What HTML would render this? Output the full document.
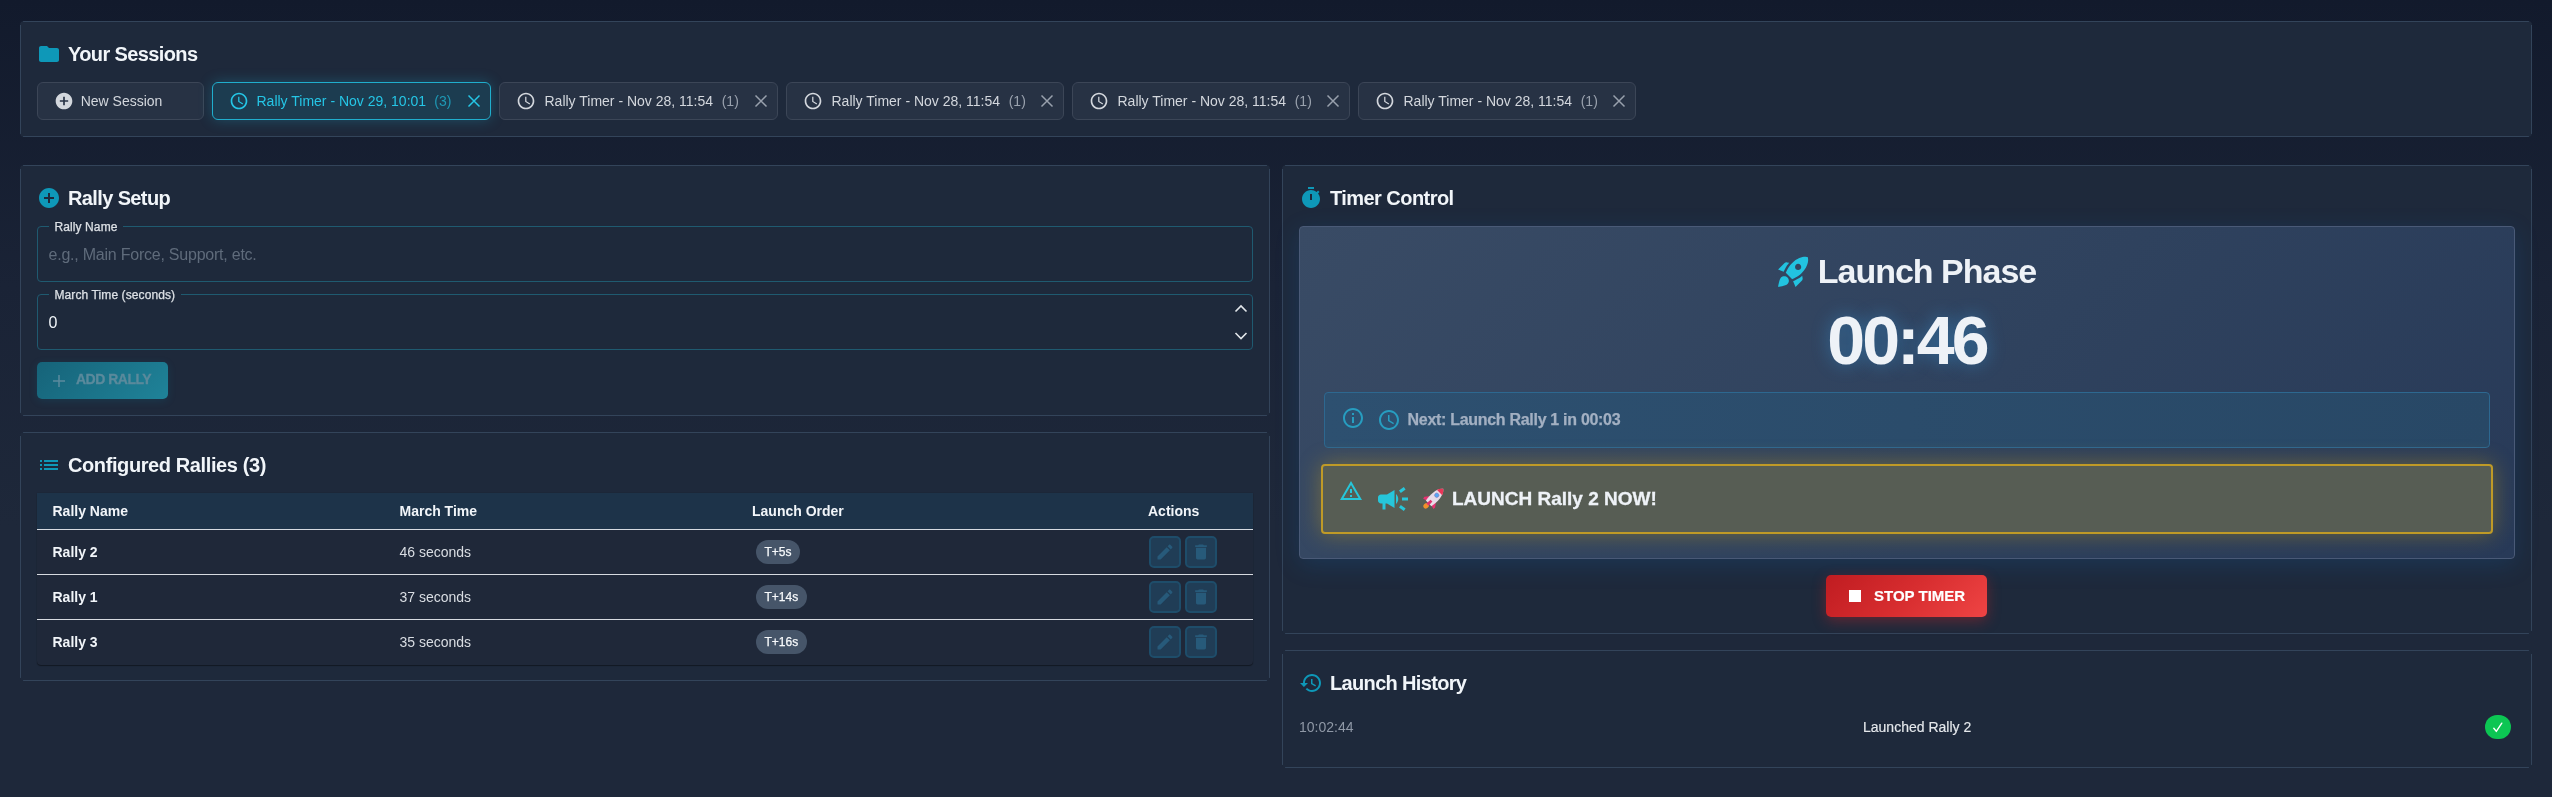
<!DOCTYPE html>
<html><head><meta charset="utf-8">
<style>
*{box-sizing:border-box;margin:0;padding:0}
html,body{width:2552px;height:797px;overflow:hidden}
body>*{will-change:transform}
body{font-family:"Liberation Sans",sans-serif;background:linear-gradient(180deg,#121a2c 0%,#1a2336 36%,#1e283a 66%,#1e283a 100%);color:#f1f5f9;position:relative}
.card{position:absolute;border-radius:4px;background:linear-gradient(#33445a,#33445a) center top/calc(100% - 6px) 1px no-repeat,linear-gradient(#33445a,#33445a) center bottom/calc(100% - 6px) 1px no-repeat,linear-gradient(#33445a,#33445a) left center/1px calc(100% - 7px) no-repeat,linear-gradient(#33445a,#33445a) right center/1px calc(100% - 7px) no-repeat,#1e293b}
.ttl{position:absolute;left:48px;top:17px;height:32px;line-height:32px;font-size:20px;font-weight:bold;color:#f1f5f9;letter-spacing:-0.62px;white-space:nowrap}
.ico{position:absolute;left:17px;top:21px;width:24px;height:24px;fill:#0e98b8}
.chip{position:absolute;top:82px;height:38px;border:1px solid #3c4657;background:#273244;border-radius:6px;display:flex;align-items:center;font-size:14px;color:#d3d7dd;white-space:nowrap}
.chip svg{width:20px;height:20px;fill:#d3d7dd;flex:none}
.chip .cl{margin-left:16px}
.chip .tx{margin-left:8.5px}
.chip .ct{margin-left:8.6px;color:#99a1ad}
.chip .x{position:absolute;right:6px;top:8px;fill:none;stroke:#99a1ad}
.chip.act{border-color:#20aecd;background:#1c3c50;color:#25c6e6;box-shadow:0 0 14px rgba(34,182,214,0.28)}
.chip.act svg{fill:#25c6e6}
.chip.act .ct{color:#1e98b5}
.chip.act .x{stroke:#25c6e6}

.fld{position:absolute;left:37px;width:1216px;height:56px}
.fld fieldset{position:absolute;inset:0;border:1px solid #1f5a70;border-radius:4px;padding:0 8px;pointer-events:none}
.fld legend{font-size:12px;height:0;padding:0 4.5px;visibility:visible;line-height:0;color:transparent;white-space:nowrap;letter-spacing:0.1px}
.fld .lbl{position:absolute;left:12px;top:-6px;padding:0 5.5px;background:#1e293b;font-size:12px;line-height:14px;color:#dde1e6;white-space:nowrap;-webkit-text-stroke:0.25px #dde1e6;letter-spacing:0.1px}
.fld .val{position:absolute;left:11.5px;top:1px;height:56px;line-height:56px;font-size:16px;white-space:nowrap}
.btn-add{position:absolute;left:37px;top:362px;width:131px;height:37px;border-radius:5px;background:linear-gradient(135deg,#166379 0%,#1f8399 100%);box-shadow:0 2px 8px rgba(8,145,178,0.15)}
table.rt{border-collapse:collapse;width:1216px}
.tbl{position:absolute;left:37px;top:493px;width:1216px;border-radius:0 0 4px 4px;overflow:hidden;background:#1f2839;box-shadow:0 1px 1px rgba(0,0,0,0.4),0 0 1px rgba(0,0,0,0.35)}
.tbl .th{height:37px;background:#1d3349;border-bottom:1px solid #d6dae0;position:relative}
.tbl .tr{height:45px;position:relative;border-bottom:1px solid #d6dae0}
.tbl .tr:last-child{border-bottom:none}
.tbl .c{position:absolute;white-space:nowrap;font-size:14px}
.tbl .th .c{font-weight:bold;color:#f1f5f9;top:10px;line-height:16px}
.tbl .tr .c{top:14px;line-height:16px;color:#d9dde3}
.tbl .tr .c.b{font-weight:bold;color:#f1f5f9}
.pill{position:absolute;left:719px;top:10px;height:24px;border-radius:12px;background:#465569;color:#f8fafc;font-size:12px;line-height:24px;padding:0 8.5px;-webkit-text-stroke:0.25px #f8fafc;white-space:nowrap}
.ab{position:absolute;top:6px;width:32px;height:32px;border:2px solid #1e4d6a;background:#203d56;border-radius:5px}
.ab svg{position:absolute;left:3.6px;top:3.7px;width:20px;height:20px;fill:#275a7a}

.tbox{position:absolute;left:1299px;top:226px;width:1216px;height:333px;border:1px solid #4a5a77;border-radius:4px;background:linear-gradient(135deg,#394b65 0%,#2f425e 55%,#283a58 100%);box-shadow:0 6px 24px rgba(20,110,190,0.2)}
.ph{position:absolute;left:0;right:0;top:24px;height:40px;display:flex;justify-content:center;align-items:center}
.ph span{font-size:34px;font-weight:bold;color:#eef2f7;letter-spacing:-1.0px;line-height:40px;white-space:nowrap}
.big{position:absolute;left:0;right:0;top:73px;height:80px;text-align:center;font-size:68px;font-weight:bold;color:#eef2f7;line-height:80px;letter-spacing:-2.9px;text-shadow:0 0 18px rgba(56,160,230,0.45)}
.info{position:absolute;left:1324px;top:392px;width:1166px;height:56px;border:1px solid #2d6890;border-radius:4px;background:linear-gradient(90deg,#2d5070 0%,#2b4c6b 50%,#284866 100%)}
.alert{position:absolute;left:1321px;top:464px;width:1172px;height:70px;border:2px solid #bf9a27;border-radius:4px;background:#575d54;box-shadow:0 0 22px rgba(234,179,8,0.35)}
.stop{position:absolute;left:1826px;top:575px;width:161px;height:42px;border-radius:5px;background:linear-gradient(135deg,#c01c21 0%,#d72d2f 50%,#ef4444 100%);box-shadow:0 4px 14px rgba(220,38,38,0.35)}
.hist{position:absolute;font-size:14px;white-space:nowrap;line-height:16px}
</style></head>
<body>

<!-- Sessions card -->
<div class="card" style="left:20px;top:21px;width:2512px;height:116px">
  <svg class="ico" viewBox="0 0 24 24"><path d="M10 4H4c-1.1 0-1.99.9-1.99 2L2 18c0 1.1.9 2 2 2h16c1.1 0 2-.9 2-2V8c0-1.1-.9-2-2-2h-8l-2-2z"/></svg>
  <div class="ttl">Your Sessions</div>
</div>
<div class="chip" style="left:37px;width:167px">
  <svg class="cl" viewBox="0 0 24 24"><path d="M12 2C6.48 2 2 6.48 2 12s4.48 10 10 10 10-4.48 10-10S17.52 2 12 2zm5 11h-4v4h-2v-4H7v-2h4V7h2v4h4v2z"/></svg>
  <span class="tx" style="margin-left:6.7px">New Session</span>
</div>
<div class="chip act" style="left:212px;width:279px">
  <svg class="cl" viewBox="0 0 24 24"><path d="M11.99 2C6.47 2 2 6.48 2 12s4.47 10 9.99 10C17.52 22 22 17.52 22 12S17.52 2 11.99 2zM12 20c-4.42 0-8-3.58-8-8s3.58-8 8-8 8 3.58 8 8-3.58 8-8 8zm.5-13H11v6l5.25 3.15.75-1.23-4.5-2.67z"/></svg>
  <span class="tx" style="margin-left:7.5px">Rally Timer - Nov 29, 10:01</span><span class="ct" style="margin-left:8.2px">(3)</span>
  <svg class="x" viewBox="0 0 24 24"><path d="M5.4 5.4L18.6 18.6M18.6 5.4L5.4 18.6" stroke-width="1.75"/></svg>
</div>
<div class="chip" style="left:499px;width:279px">
  <svg class="cl" viewBox="0 0 24 24"><path d="M11.99 2C6.47 2 2 6.48 2 12s4.47 10 9.99 10C17.52 22 22 17.52 22 12S17.52 2 11.99 2zM12 20c-4.42 0-8-3.58-8-8s3.58-8 8-8 8 3.58 8 8-3.58 8-8 8zm.5-13H11v6l5.25 3.15.75-1.23-4.5-2.67z"/></svg>
  <span class="tx">Rally Timer - Nov 28, 11:54</span><span class="ct">(1)</span>
  <svg class="x" viewBox="0 0 24 24"><path d="M5.4 5.4L18.6 18.6M18.6 5.4L5.4 18.6" stroke-width="1.75"/></svg>
</div>
<div class="chip" style="left:786px;width:278px">
  <svg class="cl" viewBox="0 0 24 24"><path d="M11.99 2C6.47 2 2 6.48 2 12s4.47 10 9.99 10C17.52 22 22 17.52 22 12S17.52 2 11.99 2zM12 20c-4.42 0-8-3.58-8-8s3.58-8 8-8 8 3.58 8 8-3.58 8-8 8zm.5-13H11v6l5.25 3.15.75-1.23-4.5-2.67z"/></svg>
  <span class="tx">Rally Timer - Nov 28, 11:54</span><span class="ct">(1)</span>
  <svg class="x" viewBox="0 0 24 24"><path d="M5.4 5.4L18.6 18.6M18.6 5.4L5.4 18.6" stroke-width="1.75"/></svg>
</div>
<div class="chip" style="left:1072px;width:278px">
  <svg class="cl" viewBox="0 0 24 24"><path d="M11.99 2C6.47 2 2 6.48 2 12s4.47 10 9.99 10C17.52 22 22 17.52 22 12S17.52 2 11.99 2zM12 20c-4.42 0-8-3.58-8-8s3.58-8 8-8 8 3.58 8 8-3.58 8-8 8zm.5-13H11v6l5.25 3.15.75-1.23-4.5-2.67z"/></svg>
  <span class="tx">Rally Timer - Nov 28, 11:54</span><span class="ct">(1)</span>
  <svg class="x" viewBox="0 0 24 24"><path d="M5.4 5.4L18.6 18.6M18.6 5.4L5.4 18.6" stroke-width="1.75"/></svg>
</div>
<div class="chip" style="left:1358px;width:278px">
  <svg class="cl" viewBox="0 0 24 24"><path d="M11.99 2C6.47 2 2 6.48 2 12s4.47 10 9.99 10C17.52 22 22 17.52 22 12S17.52 2 11.99 2zM12 20c-4.42 0-8-3.58-8-8s3.58-8 8-8 8 3.58 8 8-3.58 8-8 8zm.5-13H11v6l5.25 3.15.75-1.23-4.5-2.67z"/></svg>
  <span class="tx">Rally Timer - Nov 28, 11:54</span><span class="ct">(1)</span>
  <svg class="x" viewBox="0 0 24 24"><path d="M5.4 5.4L18.6 18.6M18.6 5.4L5.4 18.6" stroke-width="1.75"/></svg>
</div>


<!-- Rally Setup card -->
<div class="card" style="left:20px;top:165px;width:1250px;height:251px">
  <svg class="ico" viewBox="0 0 24 24"><path d="M12 2C6.48 2 2 6.48 2 12s4.48 10 10 10 10-4.48 10-10S17.52 2 12 2zm5 11h-4v4h-2v-4H7v-2h4V7h2v4h4v2z"/></svg>
  <div class="ttl">Rally Setup</div>
</div>
<div class="fld" style="top:226px">
  <fieldset></fieldset>
  <div class="lbl">Rally Name</div>
  <div class="val" style="color:#5f6b7b;letter-spacing:-0.23px">e.g., Main Force, Support, etc.</div>
</div>
<div class="fld" style="top:294px">
  <fieldset></fieldset>
  <div class="lbl">March Time (seconds)</div>
  <div class="val" style="color:#f1f5f9">0</div>
  <svg style="position:absolute;left:1197px;top:9px;width:14px;height:38px" viewBox="0 0 14 38"><path d="M1.5 8.5 L7 3 L12.5 8.5 M1.5 30 L7 35.5 L12.5 30" stroke="#e2e6ea" stroke-width="1.6" fill="none"/></svg>
</div>
<div class="btn-add">
  <svg style="position:absolute;left:14px;top:11px;width:16px;height:16px" viewBox="0 0 16 16"><path d="M8 2v12M2 8h12" stroke="#5b8b9d" stroke-width="1.5" fill="none"/></svg>
  <div style="position:absolute;left:39px;top:-1px;height:37px;line-height:37px;font-size:14px;font-weight:bold;color:#5b8a9c;letter-spacing:-0.5px;-webkit-text-stroke:0.3px #5b8a9c">ADD RALLY</div>
</div>

<!-- Configured Rallies card -->
<div class="card" style="left:20px;top:432px;width:1250px;height:249px">
  <svg class="ico" viewBox="0 0 24 24"><path d="M3 13h2v-2H3v2zm0 4h2v-2H3v2zm0-8h2V7H3v2zm4 4h14v-2H7v2zm0 4h14v-2H7v2zM7 7v2h14V7H7z"/></svg>
  <div class="ttl" style="letter-spacing:-0.4px">Configured Rallies (3)</div>
</div>
<div class="tbl">
  <div class="th">
    <div class="c" style="left:15.5px">Rally Name</div>
    <div class="c" style="left:362.5px">March Time</div>
    <div class="c" style="left:715px">Launch Order</div>
    <div class="c" style="left:1111px">Actions</div>
  </div>
  
  <div class="tr">
    <div class="c b" style="left:15.5px">Rally 2</div>
    <div class="c" style="left:362.5px">46 seconds</div>
    <div class="pill">T+5s</div>
    <div class="ab" style="left:1112px"><svg viewBox="0 0 24 24"><path d="M3 17.25V21h3.75L17.81 9.94l-3.75-3.75L3 17.25zM20.71 7.04c.39-.39.39-1.02 0-1.41l-2.34-2.34c-.39-.39-1.02-.39-1.41 0l-1.83 1.83 3.75 3.75 1.83-1.83z"/></svg></div>
    <div class="ab" style="left:1148px"><svg viewBox="0 0 24 24"><path d="M6 19c0 1.1.9 2 2 2h8c1.1 0 2-.9 2-2V7H6v12zM19 4h-3.5l-1-1h-5l-1 1H5v2h14V4z"/></svg></div>
  </div>
  <div class="tr">
    <div class="c b" style="left:15.5px">Rally 1</div>
    <div class="c" style="left:362.5px">37 seconds</div>
    <div class="pill">T+14s</div>
    <div class="ab" style="left:1112px"><svg viewBox="0 0 24 24"><path d="M3 17.25V21h3.75L17.81 9.94l-3.75-3.75L3 17.25zM20.71 7.04c.39-.39.39-1.02 0-1.41l-2.34-2.34c-.39-.39-1.02-.39-1.41 0l-1.83 1.83 3.75 3.75 1.83-1.83z"/></svg></div>
    <div class="ab" style="left:1148px"><svg viewBox="0 0 24 24"><path d="M6 19c0 1.1.9 2 2 2h8c1.1 0 2-.9 2-2V7H6v12zM19 4h-3.5l-1-1h-5l-1 1H5v2h14V4z"/></svg></div>
  </div>
  <div class="tr">
    <div class="c b" style="left:15.5px">Rally 3</div>
    <div class="c" style="left:362.5px">35 seconds</div>
    <div class="pill">T+16s</div>
    <div class="ab" style="left:1112px"><svg viewBox="0 0 24 24"><path d="M3 17.25V21h3.75L17.81 9.94l-3.75-3.75L3 17.25zM20.71 7.04c.39-.39.39-1.02 0-1.41l-2.34-2.34c-.39-.39-1.02-.39-1.41 0l-1.83 1.83 3.75 3.75 1.83-1.83z"/></svg></div>
    <div class="ab" style="left:1148px"><svg viewBox="0 0 24 24"><path d="M6 19c0 1.1.9 2 2 2h8c1.1 0 2-.9 2-2V7H6v12zM19 4h-3.5l-1-1h-5l-1 1H5v2h14V4z"/></svg></div>
  </div>
</div>


<!-- Timer Control card -->
<div class="card" style="left:1282px;top:165px;width:1250px;height:469px">
  <svg class="ico" viewBox="0 0 24 24"><path d="M9 1h6v2H9zm10.03 6.39l1.42-1.42c-.43-.51-.9-.99-1.41-1.41l-1.42 1.42C16.07 4.74 14.12 4 12 4c-4.97 0-9 4.03-9 9s4.02 9 9 9 9-4.03 9-9c0-2.12-.74-4.07-1.97-5.61zM13 14h-2V8h2v6z"/></svg>
  <div class="ttl" style="letter-spacing:-0.55px">Timer Control</div>
</div>
<div class="tbox">
  <div class="ph">
    <svg style="width:37px;height:37px;fill:#22c3e0;margin-right:6px;margin-left:-3px" viewBox="0 0 24 24"><path d="M9.19 6.35c-2.04 2.29-3.44 5.58-3.57 5.89L2 10.69l4.05-4.05c.47-.47 1.15-.68 1.81-.55l1.33.26zM11.17 17s3.74-1.55 5.89-3.7c5.4-5.4 4.5-9.62 4.21-10.57-.95-.3-5.17-1.19-10.57 4.21C8.55 9.09 7 12.83 7 12.83L11.17 17zm6.48-2.19c-2.29 2.04-5.58 3.44-5.89 3.57L13.31 22l4.05-4.05c.47-.47.68-1.15.55-1.81l-.26-1.33zM9 18c0 .83-.34 1.58-.88 2.12C6.94 21.3 2 22 2 22s.7-4.940 1.88-6.12C4.42 15.34 5.17 15 6 15c1.66 0 3 1.34 3 3zm4-9c0-1.1.9-2 2-2s2 .9 2 2-.9 2-2 2-2-.9-2-2z"/></svg>
    <span>Launch Phase</span>
  </div>
  <div class="big">00:46</div>
</div>
<div class="info">
  <svg style="position:absolute;left:16px;top:13px;width:24px;height:24px;fill:#279dc0" viewBox="0 0 24 24"><path d="M11 7h2v2h-2zm0 4h2v6h-2zm1-9C6.48 2 2 6.48 2 12s4.48 10 10 10 10-4.48 10-10S17.52 2 12 2zm0 18c-4.41 0-8-3.59-8-8s3.59-8 8-8 8 3.59 8 8-3.59 8-8 8z"/></svg>
  <svg style="position:absolute;left:52px;top:15px;width:24px;height:24px;fill:#279dc0" viewBox="0 0 24 24"><path d="M11.99 2C6.47 2 2 6.48 2 12s4.47 10 9.99 10C17.52 22 22 17.52 22 12S17.52 2 11.99 2zM12 20c-4.42 0-8-3.58-8-8s3.58-8 8-8 8 3.58 8 8-3.58 8-8 8zm.5-13H11v6l5.25 3.15.75-1.23-4.5-2.67z"/></svg>
  <div style="position:absolute;left:82.6px;top:17.6px;font-size:16px;line-height:18px;font-weight:bold;color:#a3b0c2;letter-spacing:-0.3px;white-space:nowrap;-webkit-text-stroke:0.25px #a3b0c2">Next: Launch Rally 1 in 00:03</div>
</div>
<div class="alert">
  <svg style="position:absolute;left:16px;top:12.5px;width:24px;height:24px;fill:#26c6da" viewBox="0 0 24 24"><path d="M12 5.99L19.53 19H4.47L12 5.99M12 2L1 21h22L12 2zm1 14h-2v2h2v-2zm0-6h-2v4h2v-4z"/></svg>
  <svg style="position:absolute;left:52px;top:15px;width:36px;height:36px;fill:#26c6da" viewBox="0 0 24 24"><path d="M18 11v2h4v-2h-4zm-2 6.61c.96.71 2.21 1.65 3.2 2.39.4-.53.8-1.07 1.2-1.6-.99-.74-2.24-1.68-3.2-2.4-.4.54-.8 1.08-1.2 1.61zM20.4 5.6c-.4-.53-.8-1.07-1.2-1.6-.99.74-2.24 1.68-3.2 2.4.4.53.8 1.07 1.2 1.6.96-.72 2.21-1.65 3.2-2.4zM4 9c-1.1 0-2 .9-2 2v2c0 1.1.9 2 2 2h1v4h2v-4h1l5 3V6L8 9H4zm11.5 3c0-1.33-.58-2.53-1.5-3.35v6.69c.92-.81 1.5-2.01 1.5-3.34z"/></svg>
  <svg style="position:absolute;left:99px;top:21px;width:23px;height:23px" viewBox="0 0 20 20"><g transform="rotate(45 10 10)">
<ellipse cx="10" cy="19" rx="2.2" ry="2.6" fill="#f0902a"/>
<path d="M6.8 10 L3.4 14.6 L3.6 16.4 L7.2 15.6 Z M13.2 10 L16.6 14.6 L16.4 16.4 L12.8 15.6 Z" fill="#e53271"/>
<path d="M10 -2 C14.6 1.5 14.6 10 13.4 16 L6.6 16 C5.4 10 5.4 1.5 10 -2 Z" fill="#e6dce8"/>
<path d="M10 -2 C11.8 -0.6 12.8 1 13.3 2.6 L6.7 2.6 C7.2 1 8.2 -0.6 10 -2 Z" fill="#ea3658"/>
<path d="M8.9 12.5 L11.1 12.5 L11.4 17.4 L8.6 17.4 Z" fill="#e0306c"/>
<circle cx="10" cy="6" r="1.9" fill="#55a8f5" stroke="#7d6cb5" stroke-width="0.45"/>
</g></svg>
  <div style="position:absolute;left:129px;top:22px;font-size:19px;line-height:22px;font-weight:bold;color:#eef2f7;white-space:nowrap;-webkit-text-stroke:0.3px #eef2f7">LAUNCH Rally 2 NOW!</div>
</div>
<div class="stop">
  <div style="position:absolute;left:23px;top:15px;width:12px;height:12px;background:#fff"></div>
  <div style="position:absolute;left:48px;top:0;height:42px;line-height:42px;font-size:15px;font-weight:bold;color:#fff;white-space:nowrap;-webkit-text-stroke:0.2px #fff">STOP TIMER</div>
</div>

<!-- Launch History card -->
<div class="card" style="left:1282px;top:650px;width:1250px;height:118px">
  <svg class="ico" viewBox="0 0 24 24"><path d="M13 3c-4.97 0-9 4.03-9 9H1l3.89 3.89.07.14L9 12H6c0-3.87 3.13-7 7-7s7 3.13 7 7-3.13 7-7 7c-1.93 0-3.68-.79-4.94-2.06l-1.42 1.42C8.27 19.99 10.51 21 13 21c4.97 0 9-4.03 9-9s-4.03-9-9-9zm-1 5v5l4.28 2.54.72-1.21-3.5-2.08V8H12z"/></svg>
  <div class="ttl" style="letter-spacing:-0.66px">Launch History</div>
</div>
<div class="hist" style="left:1299px;top:719px;color:#8f98a6">10:02:44</div>
<div class="hist" style="left:1863px;top:719px;color:#e5e8ec;-webkit-text-stroke:0.15px #e5e8ec">Launched Rally 2</div>
<div style="position:absolute;left:2485px;top:715px;width:26px;height:24px;border-radius:12px;background:#0cc653"><svg style="position:absolute;left:0;top:0;width:26px;height:24px" viewBox="0 0 26 24"><path d="M8.8 13.2 L11.3 16.4 L16.8 8.2" stroke="#fff" stroke-width="1.4" fill="none" stroke-linecap="round" stroke-linejoin="round"/></svg></div>


</body></html>
